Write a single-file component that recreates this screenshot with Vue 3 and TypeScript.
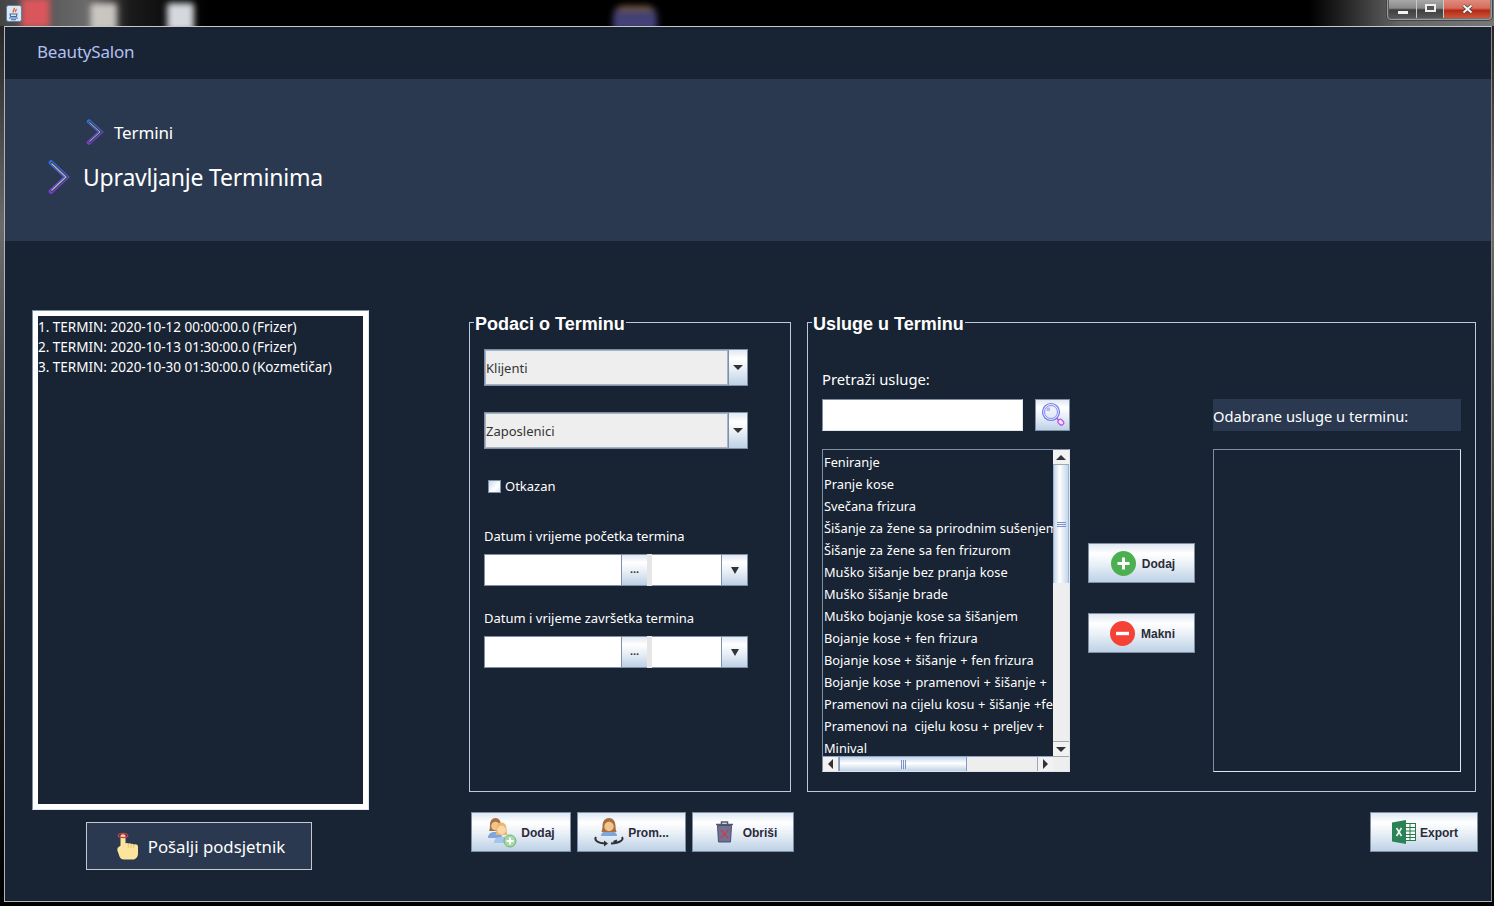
<script setup lang="ts">
const appointments = [
  '1. TERMIN: 2020-10-12 00:00:00.0 (Frizer)',
  '2. TERMIN: 2020-10-13 01:30:00.0 (Frizer)',
  '3. TERMIN: 2020-10-30 01:30:00.0 (Kozmetičar)',
];

const combos = ['Klijenti', 'Zaposlenici'];

const dateLabels = ['Datum i vrijeme početka termina', 'Datum i vrijeme završetka termina'];

const services = [
  'Feniranje',
  'Pranje kose',
  'Svečana frizura',
  'Šišanje za žene sa prirodnim sušenjem',
  'Šišanje za žene sa fen frizurom',
  'Muško šišanje bez pranja kose',
  'Muško šišanje brade',
  'Muško bojanje kose sa šišanjem',
  'Bojanje kose + fen frizura',
  'Bojanje kose + šišanje + fen frizura',
  'Bojanje kose + pramenovi + šišanje +  fen frizura',
  'Pramenovi na cijelu kosu + šišanje +fen frizura',
  'Pramenovi na  cijelu kosu + preljev +   šišanje',
  'Minival',
];
</script>

<template>
  <div class="desktop">
    <div class="taskbar">
      <span class="blob blob-red"></span>
      <span class="blob blob-file"></span>
      <span class="blob blob-file blob-file2"></span>
      <span class="blob blob-app"></span>
      <svg class="java-icon" width="16" height="17" viewBox="0 0 16 17">
        <rect x="0.5" y="0.5" width="15" height="16" rx="2" fill="#dbe7f3" stroke="#5f7fa8" />
        <path d="M8 3c1.5 1.500-2 2.500-.5 4.500M10 4c.8 1-1 1.500-.3 3" fill="none" stroke="#e2571e" stroke-width="1.300" />
        <path d="M4 9h7l-.6 2.500H4.600zM3 13h9M5 14.800h5" fill="none" stroke="#3f6da5" stroke-width="1.100" />
      </svg>
      <div class="win-controls">
        <span class="ctl ctl-min"><i class="glyph-min"></i></span>
        <span class="ctl ctl-max"><i class="glyph-max"></i></span>
        <span class="ctl ctl-close">
          <svg width="13" height="10" viewBox="0 0 13 10">
            <path d="M2.500 1.500l8 7M10.500 1.500l-8 7" stroke="#3b3b3b" stroke-width="3.600" />
            <path d="M2.500 1.500l8 7M10.500 1.500l-8 7" stroke="#f4f4f4" stroke-width="2.200" />
          </svg>
        </span>
      </div>
    </div>

    <div class="window">
      <header class="app-header">BeautySalon</header>

      <section class="banner">
        <div class="crumb">
          <svg class="chev" width="18" height="26" viewBox="0 0 18 26">
            <defs>
              <linearGradient id="chevA" x1="0" y1="0" x2="0" y2="1">
                <stop offset="0" stop-color="#2f6fe0" />
                <stop offset="1" stop-color="#8a35d8" />
              </linearGradient>
            </defs>
            <path d="M3 2.500L14.500 13 3 23.500" fill="none" stroke="url(#chevA)" stroke-width="4.400" stroke-linecap="round" />
            <path d="M3 2.500L14.500 13 3 23.500" fill="none" stroke="#39435f" stroke-width="2.400" />
            <path d="M3.500 3.500L14 13 3.500 22.500" fill="none" stroke="#b4bccb" stroke-width="1" />
          </svg>
          <span>Termini</span>
        </div>
        <h1 class="page-title">
          <svg class="chev-big" width="22" height="34" viewBox="0 0 22 34">
            <defs>
              <linearGradient id="chevB" x1="0" y1="0" x2="0" y2="1">
                <stop offset="0" stop-color="#2f6fe0" />
                <stop offset="1" stop-color="#8a35d8" />
              </linearGradient>
            </defs>
            <path d="M3 2.500L18.500 17 3 31.500" fill="none" stroke="url(#chevB)" stroke-width="4.600" stroke-linecap="round" />
            <path d="M3 2.500L18.500 17 3 31.500" fill="none" stroke="#39435f" stroke-width="2.600" />
            <path d="M3.500 3.500L18 17 3.500 30.500" fill="none" stroke="#b4bccb" stroke-width="1.100" />
          </svg>
          <span>Upravljanje Terminima</span>
        </h1>
      </section>

      <main class="content">
        <div class="left-col">
          <div class="term-box">
            <div class="term-list">
              <div v-for="item in appointments" :key="item" class="term-row">{{ item }}</div>
            </div>
          </div>
          <button class="reminder">
            <svg width="22" height="28" viewBox="0 0 22 28">
              <path d="M3.500 4c0-2.200 5-2.200 5 0v7.500c1-.8 2.200-.6 2.800.2.900-.7 2.200-.5 2.800.4 1-.6 2.200-.3 2.700.6 1.500-.8 4.200-.2 4.200 2v6.800c0 3.500-2.400 6-5 6H7c-2.500 0-3.500-1-4.500-3L.6 19c-.8-2 .2-3.500 1.400-4.200l1.500-1z" fill="#fde49c" />
              <path d="M11.300 11.700v4M14.100 12.100v4M16.800 12.700v3.500" stroke="#d9b567" stroke-width="0.700" fill="none" />
              <ellipse cx="6" cy="3.500" rx="4.800" ry="2" fill="none" stroke="#c9404a" stroke-width="1.300" />
            </svg>
            <span>Pošalji podsjetnik</span>
          </button>
        </div>

        <div class="main-col">
          <div class="panels">
            <fieldset class="panel panel-data">
              <legend>Podaci o Terminu</legend>

              <div v-for="name in combos" :key="name" class="combo">
                <span class="combo-value">{{ name }}</span>
                <span class="combo-arrow"><i class="tri"></i></span>
              </div>

              <label class="check">
                <span class="check-box"></span>
                <span>Otkazan</span>
              </label>

              <div v-for="label in dateLabels" :key="label" class="date-group">
                <div class="date-label">{{ label }}</div>
                <div class="date-row">
                  <span class="date-input"></span>
                  <span class="date-btn dots">...</span>
                  <span class="date-sep"></span>
                  <span class="time-input"></span>
                  <span class="date-btn"><i class="tri tri-small"></i></span>
                </div>
              </div>
            </fieldset>

            <fieldset class="panel panel-services">
              <legend>Usluge u Terminu</legend>
              <div class="services-grid">
                <div class="services-col">
                  <div class="search-label">Pretraži usluge:</div>
                  <div class="search-row">
                    <span class="search-input"></span>
                    <button class="search-btn">
                      <svg width="24" height="26" viewBox="0 0 24 26">
                        <circle cx="10" cy="10" r="8.500" fill="#dfe6fb" fill-opacity="0.500" stroke="#6f7cf4" stroke-width="1.200" />
                        <circle cx="10" cy="10" r="6.500" fill="none" stroke="#8d86f5" stroke-width="1" />
                        <rect x="5.500" y="5.500" width="3.500" height="3.500" fill="#c0b2ee" />
                        <path d="M15.500 16l3 3" stroke="#a05cf0" stroke-width="1.500" />
                        <rect x="17" y="18" width="6" height="4.500" rx="2" transform="rotate(45 20 20)" fill="#f0e4fb" stroke="#bb4df0" stroke-width="1.200" />
                      </svg>
                    </button>
                  </div>
                  <div class="service-list">
                    <div class="service-items">
                      <div v-for="s in services" :key="s" class="service-row">{{ s }}</div>
                    </div>
                    <div class="vbar">
                      <span class="sb-btn"><i class="tri tri-up"></i></span>
                      <span class="vthumb"><i class="vgrip"></i></span>
                      <span class="vtrack"></span>
                      <span class="sb-btn"><i class="tri"></i></span>
                    </div>
                    <div class="hbar">
                      <span class="sb-btn-h"><i class="tri-left"></i></span>
                      <span class="hthumb"><i class="hgrip"></i></span>
                      <span class="htrack"></span>
                      <span class="sb-btn-h"><i class="tri-right"></i></span>
                    </div>
                    <div class="corner"></div>
                  </div>
                </div>

                <div class="move-col">
                  <button class="btn move-btn move-add">
                    <svg width="25" height="25" viewBox="0 0 25 25">
                      <circle cx="12.500" cy="12.500" r="12.500" fill="#4caf50" />
                      <path d="M12.500 6.500v12M6.500 12.500h12" stroke="#fff" stroke-width="3" />
                    </svg>
                    <span>Dodaj</span>
                  </button>
                  <button class="btn move-btn move-del">
                    <svg width="25" height="25" viewBox="0 0 25 25">
                      <circle cx="12.500" cy="12.500" r="12.500" fill="#f44336" />
                      <path d="M6 12.500h13" stroke="#fff" stroke-width="3.400" />
                    </svg>
                    <span>Makni</span>
                  </button>
                </div>

                <div class="services-col selected-col">
                  <div class="selected-title">Odabrane usluge u terminu:</div>
                  <div class="selected-list"></div>
                </div>
              </div>
            </fieldset>
          </div>

          <div class="actions">
            <button class="btn act-add">
              <svg width="30" height="31" viewBox="0 0 30 31">
                <path d="M1 21c0-4 3-6 6-6h3c3 0 5 2 5 6z" fill="#7fa6dc" />
                <path d="M3 8c0-4 2-7 5.500-7S14 4 14 9c0 2 .5 4 1 5H2c.7-1.500 1-3.500 1-6z" fill="#a8703f" />
                <circle cx="8.500" cy="9" r="4.300" fill="#f4c48e" />
                <path d="M7 26c0-4 3-6 6-6h3c3 0 6 2 6 6z" fill="#a4c4ec" />
                <path d="M9.500 12c0-4 2-6.500 5-6.500s5 2.500 5 6.500c0 2 .5 4 1 6h-12c.6-1.500 1-3.800 1-6z" fill="#eab66e" />
                <circle cx="14.500" cy="13" r="4.400" fill="#fbd7a8" />
                <circle cx="23" cy="24" r="6" fill="#a6d8a8" stroke="#6fb575" />
                <path d="M23 20.500v7M19.500 24h7" stroke="#fff" stroke-width="1.800" />
              </svg>
              <span>Dodaj</span>
            </button>
            <button class="btn act-edit">
              <svg width="30" height="30" viewBox="0 0 30 30">
                <path d="M7 19c0-3.500 3-5 6-5h4c3 0 6 1.500 6 5z" fill="#7fa6dc" />
                <path d="M8.500 9c0-5 2.500-8 6.500-8s6.500 3 6.500 8c0 2.500.5 4 1 6h-15c.5-2 1-3.500 1-6z" fill="#a8703f" />
                <circle cx="15" cy="9.500" r="4.700" fill="#f4c48e" />
                <path d="M2 20c-2 3 1 6 10 6.500M28 20c2 3-2 6-11 6.500" fill="none" stroke="#2e3338" stroke-width="2" />
                <path d="M10 23.500l4 3-4 3z" fill="#2e3338" />
                <path d="M23 23.500l-3.500 1.500" stroke="#2e3338" stroke-width="2" />
              </svg>
              <span>Prom...</span>
            </button>
            <button class="btn act-del">
              <svg width="19" height="22" viewBox="0 0 19 22">
                <path d="M1 3.500h17M6.500 3V1h6v2" fill="none" stroke="#53586e" stroke-width="1.500" />
                <path d="M2.500 4.500h14l-1 16.500h-12z" fill="#6d7396" stroke="#4c5068" />
                <path d="M5.500 8.500l8 9M13.500 8.500l-8 9" stroke="#cf3b46" stroke-width="1.200" />
              </svg>
              <span>Obriši</span>
            </button>
            <button class="btn act-export">
              <svg width="24" height="24" viewBox="0 0 24 24">
                <rect x="11" y="3.500" width="12.500" height="17" fill="#fff" stroke="#237a4b" />
                <path d="M14 7.500h9M14 11h9M14 14.500h9M14 17.500h9M18 4v16" stroke="#237a4b" stroke-width="1" />
                <path d="M0 2.500L14 0v24L0 21.500z" fill="#2b8257" />
                <path d="M4.500 8l5 8M9.500 8l-5 8" stroke="#e9f4ee" stroke-width="1.700" />
              </svg>
              <span>Export</span>
            </button>
          </div>
        </div>
      </main>
    </div>
  </div>
</template>

<style scoped>
.desktop {
  width: 1494px;
  height: 906px;
  overflow: hidden;
  display: flex;
  flex-direction: column;
  padding: 0 2px 4px 4px;
  box-sizing: border-box;
  background: linear-gradient(to bottom, #1d1d1d 0, #6b6b6b 25%, #222 70%, #000 100%);
  font-family: "Noto Sans", "Open Sans", sans-serif;
  color: #fff;
}

.taskbar {
  position: relative;
  height: 26px;
  flex: none;
  margin: 0 -2px 0 -4px;
  background: linear-gradient(to right, #444 0, #6a6a6a 85px, #1a1a1a 130px, #000 210px, #000 1310px, #2a2a2a 1350px, #666 1400px, #777 100%);
  overflow: hidden;
}

.java-icon {
  position: absolute;
  left: 6px;
  top: 5px;
}

.blob {
  position: absolute;
  filter: blur(3px);
}

.blob-red {
  left: 21px;
  top: -2px;
  width: 29px;
  height: 30px;
  background: #d9575c;
}

.blob-file {
  left: 90px;
  top: 3px;
  width: 27px;
  height: 28px;
  border-radius: 3px;
  background: #c9c6c0;
}

.blob-file2 {
  left: 167px;
  background: #d5d8dd;
}

.blob-app {
  left: 613px;
  top: 6px;
  width: 44px;
  height: 24px;
  border-radius: 10px 10px 0 0;
  background: linear-gradient(#9a7238 0, #3f3d72 30%, #4a4680 100%);
}

.win-controls {
  position: absolute;
  right: 2px;
  top: -1px;
  display: flex;
  height: 18px;
  border: 1px solid #9a9a9a;
  border-radius: 0 0 4px 4px;
  padding: 0 1px 1px;
  box-shadow: 0 0 0 1px #444;
}

.ctl {
  display: flex;
  align-items: center;
  justify-content: center;
  height: 100%;
  width: 27px;
  border-right: 1px solid #c8c8c8;
  background: linear-gradient(#a8a8a8 0, #8a8a8a 45%, #3f3f3f 55%, #575757 100%);
}

.ctl-max {
  width: 26px;
}

.ctl-close {
  width: 46px;
  border-right: 0;
  background: linear-gradient(#e08b7d 0, #d56c5c 45%, #b62a12 58%, #c9563f 100%);
}

.glyph-min {
  display: block;
  width: 10px;
  height: 3px;
  margin-top: 6px;
  background: #f2f2f2;
}

.glyph-max {
  display: block;
  width: 7px;
  height: 4px;
  margin-top: -3px;
  border: 2px solid #eee;
  background: #555;
}

.window {
  flex: 1;
  min-height: 0;
  display: flex;
  flex-direction: column;
  background: #182333;
  border: 1px solid #b4b4b4;
  border-top-color: #c8c8c8;
  border-right-color: #888;
}

.app-header {
  height: 52px;
  flex: none;
  box-sizing: border-box;
  display: flex;
  align-items: center;
  padding: 0 0 4px 32px;
  font-size: 17px;
  letter-spacing: -0.2px;
  color: #b3c0f2;
}

.banner {
  height: 162px;
  flex: none;
  box-sizing: border-box;
  background: #2a3950;
  padding-top: 40px;
}

.crumb {
  display: flex;
  align-items: center;
  height: 26px;
  padding-left: 81px;
  gap: 10px;
  font-size: 17px;
  letter-spacing: -0.15px;
}

.page-title {
  display: flex;
  align-items: center;
  margin: 15px 0 0;
  height: 34px;
  padding-left: 43px;
  gap: 13px;
  font-size: 23px;
  letter-spacing: -0.2px;
  font-weight: 400;
}

.content {
  flex: 1;
  display: flex;
  padding: 69px 0 0 27px;
  min-height: 0;
}

.left-col {
  width: 337px;
  flex: none;
  margin-right: 100px;
}

.term-box {
  box-sizing: border-box;
  height: 500px;
  border: 1px solid #7d8fa5;
  border-right-color: #dfe6ee;
  border-bottom-color: #dfe6ee;
}

.term-list {
  box-sizing: border-box;
  height: 100%;
  border: 5px solid #fff;
  padding-top: 1px;
}

.term-row {
  height: 20px;
  line-height: 20px;
  font-size: 13.5px;
  white-space: nowrap;
}

.reminder {
  display: flex;
  align-items: center;
  justify-content: center;
  gap: 9px;
  box-sizing: border-box;
  width: 226px;
  height: 48px;
  margin: 12px 0 0 54px;
  padding: 0 0 0 4px;
  background: #2a3950;
  border: 1px solid #c5c9cf;
  color: #fff;
  font: 16.8px "Noto Sans", "Open Sans", sans-serif;
}

.main-col {
  width: 1007px;
  flex: none;
}

.panels {
  display: flex;
  gap: 16px;
  height: 482px;
}

.panel {
  box-sizing: border-box;
  margin: 0;
  padding: 0;
  min-width: 0;
  height: 482px;
  border: 1px solid #b7cbe0;
}

.panel-data {
  width: 322px;
  padding-left: 14px;
}

.panel-services {
  width: 669px;
  padding-left: 14px;
}

legend {
  padding: 4px 1px 0;
  margin-left: -10px;
  font: bold 18px/20px "Liberation Sans", Arial, sans-serif;
  color: #fff;
}

.combo {
  display: flex;
  box-sizing: border-box;
  width: 264px;
  height: 37px;
  margin-top: 15px;
  border: 1px solid #7f90a6;
}

.combo + .combo {
  margin-top: 26px;
}

.combo-value {
  flex: 1;
  display: flex;
  align-items: center;
  background: #eee;
  color: #333;
  font-size: 13px;
  border: 1px solid #a5b3c5;
}

.combo-arrow,
.date-btn {
  display: flex;
  align-items: center;
  justify-content: center;
  flex: none;
  border-left: 1px solid #7f90a6;
  background: linear-gradient(#e0e8f2 0, #fff 25%, #e8eff6 55%, #bdd1e6 100%);
}

.combo-arrow {
  width: 18px;
}

.tri {
  display: block;
  width: 0;
  height: 0;
  border-left: 5px solid transparent;
  border-right: 5px solid transparent;
  border-top: 5px solid #333;
}

.tri-small {
  border-left-width: 4px;
  border-right-width: 4px;
  border-top-width: 7px;
}

.tri-up {
  border-top: 0;
  border-bottom: 5px solid #333;
}

.check {
  display: flex;
  align-items: center;
  gap: 4px;
  height: 20px;
  margin: 27px 0 0 4px;
  font-size: 13px;
}

.check-box {
  box-sizing: border-box;
  width: 13px;
  height: 13px;
  border: 1px solid #7f90a6;
  background: linear-gradient(135deg, #c7d8ea 0, #fff 60%, #e2eaf4 100%);
}

.date-group {
  margin-top: 31px;
}

.date-group + .date-group {
  margin-top: 23px;
}

.date-label {
  height: 20px;
  line-height: 20px;
  font-size: 13px;
  margin-top: -1px;
}

.date-row {
  display: flex;
  box-sizing: border-box;
  width: 264px;
  height: 32px;
  margin-top: 8px;
  border: 1px solid #7f90a6;
  background: #fff;
}

.date-input {
  width: 136px;
  flex: none;
}

.time-input {
  flex: 1;
}

.date-btn {
  width: 25px;
}

.dots {
  box-sizing: border-box;
  width: 26px;
  align-items: flex-start;
  color: #333;
  font: bold 11px/28px "Liberation Sans", sans-serif;
  border-right: 0;
}

.date-sep {
  width: 5px;
  flex: none;
  background: #e6e6e6;
  margin: -1px 0;
}

.services-grid {
  display: flex;
}

.services-col {
  width: 248px;
  flex: none;
}

.search-label {
  height: 24px;
  line-height: 24px;
  margin-top: 33px;
  font-size: 14.8px;
}

.search-row {
  display: flex;
  justify-content: space-between;
  margin-top: 8px;
  height: 32px;
}

.search-input {
  box-sizing: border-box;
  width: 201px;
  background: #fff;
  border: 1px solid #dfe6ee;
  border-top-color: #7d8fa5;
  border-left-color: #7d8fa5;
  box-shadow: inset 0 0 0 1px #fff;
}

.search-btn {
  display: flex;
  align-items: center;
  justify-content: center;
  box-sizing: border-box;
  width: 35px;
  height: 32px;
  padding: 0;
  background: linear-gradient(#e0e8f2 0, #fff 25%, #e8eff6 55%, #bdd1e6 100%);
  border: 1px solid #7f90a6;
}

.service-list {
  display: grid;
  grid-template-columns: 1fr 16px;
  grid-template-rows: 1fr 15px;
  box-sizing: border-box;
  height: 323px;
  margin-top: 18px;
  border: 1px solid #dfe6ee;
  border-top-color: #7d8fa5;
  border-left-color: #7d8fa5;
}

.service-items {
  overflow: hidden;
  min-width: 0;
  padding: 1px 0 0 1px;
}

.service-row {
  height: 22px;
  line-height: 22px;
  font-size: 12.8px;
  word-spacing: 0.4px;
  white-space: pre;
}

.vbar {
  display: flex;
  flex-direction: column;
  background: #eee;
  min-height: 0;
}

.sb-btn {
  height: 15px;
  flex: none;
  display: flex;
  align-items: center;
  justify-content: center;
  background: #f2f2f2;
  border: 1px solid #9aa8b8;
  border-width: 0 0 1px;
  box-sizing: border-box;
}

.vbar .sb-btn:last-child {
  border-width: 1px 0 0;
}

.vthumb {
  height: 118px;
  flex: none;
  display: flex;
  align-items: center;
  justify-content: center;
  background: linear-gradient(to right, #c3d6ea 0, #fff 40%, #c3d6ea 100%);
  border-left: 1px solid #9db4d4;
  border-right: 1px solid #9db4d4;
  box-sizing: border-box;
}

.vgrip {
  display: block;
  width: 9px;
  height: 5px;
  background: repeating-linear-gradient(#7a90cc 0 1px, transparent 1px 2px);
}

.vtrack {
  flex: 1;
}

.hbar {
  display: flex;
  background: #eee;
  min-width: 0;
  border-top: 1px solid #8ea5c8;
}

.sb-btn-h {
  width: 16px;
  flex: none;
  display: flex;
  align-items: center;
  justify-content: center;
  background: #f2f2f2;
  border-right: 1px solid #9aa8b8;
  box-sizing: border-box;
}

.hbar .sb-btn-h:last-child {
  border-right: 0;
  border-left: 1px solid #9aa8b8;
}

.tri-left,
.tri-right {
  display: block;
  width: 0;
  height: 0;
  border-top: 5px solid transparent;
  border-bottom: 5px solid transparent;
}

.tri-left {
  border-right: 5px solid #333;
}

.tri-right {
  border-left: 5px solid #333;
}

.hthumb {
  width: 128px;
  flex: none;
  display: flex;
  align-items: center;
  justify-content: center;
  box-sizing: border-box;
  background: linear-gradient(#c3d6ea 0, #fff 45%, #bdd1e6 100%);
  border-right: 1px solid #7f9acb;
  border-left: 1px solid #7f9acb;
}

.hgrip {
  display: block;
  width: 5px;
  height: 9px;
  background: repeating-linear-gradient(to right, #7a90cc 0 1px, transparent 1px 2px);
}

.htrack {
  flex: 1;
}

.corner {
  background: #eee;
  border-top: 1px solid #9aa8b8;
}

.move-col {
  width: 107px;
  flex: none;
  margin: 209px 18px 0;
  display: flex;
  flex-direction: column;
  gap: 30px;
}

.selected-col {
  padding-top: 65px;
}

.selected-title {
  height: 32px;
  line-height: 34px;
  background: #2a3950;
  font-size: 14.7px;
  white-space: nowrap;
}

.selected-list {
  box-sizing: border-box;
  height: 323px;
  margin-top: 18px;
  border: 1px solid #dfe6ee;
  border-top-color: #7d8fa5;
  border-left-color: #7d8fa5;
}

.btn {
  display: flex;
  align-items: center;
  justify-content: center;
  box-sizing: border-box;
  height: 40px;
  padding: 0;
  gap: 6px;
  flex: none;
  background: linear-gradient(#dfe8f2 0, #fff 25%, #e8eff6 55%, #bdd1e6 100%);
  border: 1px solid #7f90a6;
  color: #2b2b3a;
  font: bold 12px "Liberation Sans", Arial, sans-serif;
}

.btn span {
  padding-top: 1px;
}

.move-add {
  padding-left: 3px;
}

.move-del {
  padding-left: 2px;
}

.actions {
  display: flex;
  align-items: center;
  margin: 20px -2px 0 2px;
}

.act-add {
  width: 100px;
  gap: 4px;
}

.act-edit {
  width: 109px;
  margin-left: 6px;
  gap: 4px;
}

.act-del {
  width: 102px;
  margin-left: 6px;
  gap: 9px;
  padding-left: 6px;
}

.act-export {
  width: 108px;
  margin-left: auto;
  gap: 4px;
  padding-left: 2px;
}
</style>

<style>
html,
body {
  margin: 0;
  background: #000;
  overflow: hidden;
}
</style>
